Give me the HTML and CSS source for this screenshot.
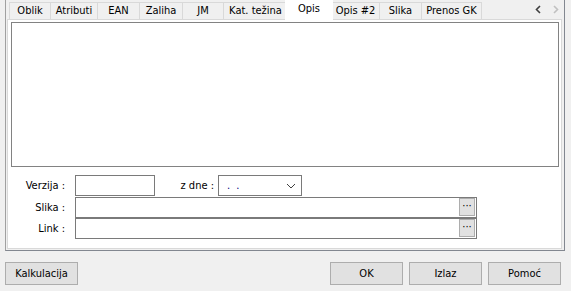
FILE: index.html
```html
<!DOCTYPE html>
<html lang="hr">
  <head>
    <meta charset="UTF-8" />
    <title>Artikal - Opis</title>
    <link rel="stylesheet" href="styles.css">
  </head>
  <body>
    <div class="tabctl">
      <div class="tabstrip">
        <div class="tab">Oblik</div>
        <div class="tab">Atributi</div>
        <div class="tab">EAN</div>
        <div class="tab">Zaliha</div>
        <div class="tab">JM</div>
        <div class="tab">Kat. težina</div>
        <div class="tab active">Opis</div>
        <div class="tab">Opis #2</div>
        <div class="tab">Slika</div>
        <div class="tab">Prenos GK</div>
        <div class="scroll">
          <svg width="9" height="9" viewBox="0 0 9 9"><polyline points="6,1 2.5,4.5 6,8" fill="none" stroke="#404040" stroke-width="1.6"/></svg>
          <svg width="9" height="9" viewBox="0 0 9 9"><polyline points="3,1 6.5,4.5 3,8" fill="none" stroke="#c0c0c0" stroke-width="1.6"/></svg>
        </div>
      </div>
      <div class="page">
        <div class="memo"></div>
        <div class="form">
          <div class="row">
            <label class="lbl">Verzija :</label>
            <div class="box verzija"></div>
            <label class="lbl2">z dne :</label>
            <div class="box combo">
              <span class="date"><i>.</i><i>.</i></span>
              <svg width="10" height="6" viewBox="0 0 10 6"><polyline points="1,1 5,5 9,1" fill="none" stroke="#404040" stroke-width="1"/></svg>
            </div>
          </div>
          <div class="row">
            <label class="lbl">Slika :</label>
            <div class="box wide"><span class="dots">···</span></div>
          </div>
          <div class="row tight">
            <label class="lbl">Link :</label>
            <div class="box wide"><span class="dots">···</span></div>
          </div>
        </div>
      </div>
    </div>
    <div class="buttons">
      <button class="btn">Kalkulacija</button>
      <div class="spacer"></div>
      <button class="btn">OK</button>
      <button class="btn">Izlaz</button>
      <button class="btn">Pomoć</button>
    </div>
  </body>
</html>
```

FILE: styles.css
```css
body {
  margin: 0;
  background: #f0f0f0;
  font-family: "DejaVu Sans Condensed", "DejaVu Sans", sans-serif;
  font-stretch: condensed;
  font-size: 11px;
  color: #000;
}

.tabctl {
  box-sizing: border-box;
  margin-left: 5px;
  width: 560px;
  height: 251px;
  border-left: 1px solid #a0a0a0;
  border-right: 1px solid #828790;
  border-bottom: 1px solid #828790;
  display: flex;
  flex-direction: column;
}

.tabstrip {
  height: 19px;
  display: flex;
  align-items: flex-end;
  padding-left: 3px;
  background: #f0f0f0;
}

.tab {
  box-sizing: border-box;
  flex: none;
  height: 17px;
  padding: 0;
  border: 1px solid #d9d9d9;
  border-bottom: none;
  margin-right: -1px;
  background: #f0f0f0;
  line-height: 15px;
  text-align: center;
  white-space: nowrap;
}

.tab:nth-child(1) { width: 42px; }
.tab:nth-child(2) { width: 48px; }
.tab:nth-child(3) { width: 43px; }
.tab:nth-child(4) { width: 44px; }
.tab:nth-child(5) { width: 42px; }
.tab:nth-child(6) { width: 65px; }
.tab:nth-child(8) { width: 49px; }
.tab:nth-child(9) { width: 43px; }
.tab:nth-child(10) { width: 61px; }

.tab.active {
  width: 48px;
  height: 20px;
  margin: 0 -2px -1px -2px;
  background: #fff;
  border-color: #fff;
  line-height: 16px;
  position: relative;
  z-index: 1;
}

.scroll {
  margin-left: auto;
  align-self: center;
  display: flex;
  gap: 8px;
  padding-right: 4px;
}

.scroll svg {
  display: block;
}

.page {
  flex: 1;
  margin: 0 2px 1px 1px;
  border: 1px solid #d9d9d9;
  background: #fff;
  padding: 2px 0 0 3px;
}

.memo {
  box-sizing: border-box;
  width: 548px;
  height: 145px;
  border: 1px solid #828282;
  background: #fff;
}

.form {
  margin-top: 8px;
  margin-left: -3px;
}

.row {
  display: flex;
  align-items: center;
  height: 21px;
  margin-bottom: 1px;
}

.row.tight {
  margin-top: -1px;
}

.lbl {
  width: 57px;
  text-align: right;
  margin-right: 10px;
}

.lbl2 {
  width: 59px;
  text-align: right;
  margin-right: 4px;
}

.box {
  box-sizing: border-box;
  height: 21px;
  border: 1px solid #7a7a7a;
  background: #fff;
}

.verzija {
  width: 80px;
}

.combo {
  width: 84px;
  display: flex;
  align-items: center;
  padding: 0 5px 0 8px;
}

.date {
  color: #000080;
  flex: 1;
  display: flex;
  gap: 6px;
}

.date i {
  font-style: normal;
}

.wide {
  width: 402px;
  display: flex;
  justify-content: flex-end;
  padding: 0 1px 1px 0;
}

.dots {
  box-sizing: border-box;
  width: 16px;
  height: 18px;
  border: 1px solid #adadad;
  background: #e1e1e1;
  text-align: center;
  line-height: 14px;
  font-size: 11px;
}

.buttons {
  display: flex;
  gap: 6px;
  margin: 11px 10px 0 5px;
}

.spacer {
  flex: 1;
}

.btn {
  box-sizing: border-box;
  width: 73px;
  height: 23px;
  border: 1px solid #adadad;
  background: #e1e1e1;
  font-family: inherit;
  font-stretch: condensed;
  font-size: 11px;
  color: #000;
  padding: 0;
}
```
